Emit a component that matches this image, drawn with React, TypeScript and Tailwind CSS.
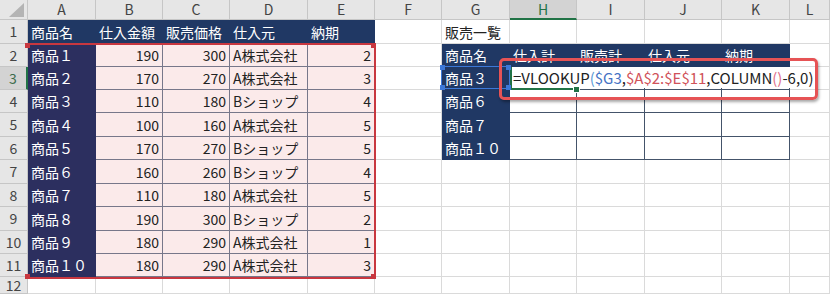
import React from "react";

const cols = ["A", "B", "C", "D", "E", "F", "G", "H", "I", "J", "K", "L"];

const rows: (string | number)[][] = [
  ["商品名", "仕入金額", "販売価格", "仕入元", "納期"],
  ["商品１", 190, 300, "A株式会社", 2],
  ["商品２", 170, 270, "A株式会社", 3],
  ["商品３", 110, 180, "Bショップ", 4],
  ["商品４", 100, 160, "A株式会社", 5],
  ["商品５", 170, 270, "Bショップ", 5],
  ["商品６", 160, 260, "Bショップ", 4],
  ["商品７", 110, 180, "A株式会社", 5],
  ["商品８", 190, 300, "Bショップ", 2],
  ["商品９", 180, 290, "A株式会社", 1],
  ["商品１０", 180, 290, "A株式会社", 3],
];

const summary: Record<number, string[]> = {
  2: ["商品名", "仕入計", "販売計", "仕入元", "納期"],
  3: ["商品３"],
  4: ["商品６"],
  5: ["商品７"],
  6: ["商品１０"],
};

const NAVY = "bg-[#203864] text-white border-r border-b border-[#203864]";
const NAVY_A = "bg-[#2c2f5f] text-white border-r border-b border-[#2c2f5f]";
const PINK = "bg-[#fbeaea] text-[#222] border-r border-b border-[#77778a]";
const PLAIN = "bg-white text-[#222] border-r border-b border-[#dadada]";
const BOXED = "bg-white text-[#222] border-r border-b border-[#44546a]";

// four small square grips laid out on the corners of a range-finder box
function Grips({ color }: { color: string }) {
  return (
    <div className="absolute -inset-[2px] flex flex-col justify-between pointer-events-none">
      <div className="flex justify-between">
        <span className={`w-[5px] h-[5px] ${color}`} />
        <span className={`w-[5px] h-[5px] ${color}`} />
      </div>
      <div className="flex justify-between">
        <span className={`w-[5px] h-[5px] ${color}`} />
        <span className={`w-[5px] h-[5px] ${color}`} />
      </div>
    </div>
  );
}

function Formula() {
  return (
    <span className="relative z-10 flex items-center self-stretch min-w-[302px] bg-white pl-[1px] text-[15px] text-[#222]">
      =VLOOKUP<span className="text-[#5b9bd5]">(</span>
      <span className="text-[#4472c4]">$G3</span>,
      <span className="text-[#d0525a]">$A$2:$E$11</span>,COLUMN
      <span className="text-[#e0708a]">()</span>-6,0)
    </span>
  );
}

function cellFor(r: number, c: number): { text: React.ReactNode; cls: string; right?: boolean } {
  if (r <= 11 && c <= 5) {
    const v = rows[r - 1][c - 1];
    if (r === 1) return { text: v, cls: NAVY };
    if (c === 1) return { text: v, cls: NAVY_A };
    return { text: v, cls: PINK, right: typeof v === "number" };
  }
  if (r === 1 && c === 7) return { text: "販売一覧", cls: PLAIN };
  if (r === 3 && c === 8)
    return {
      text: (
        <>
          <Formula />
          <span className="absolute -right-[3px] -bottom-[4px] z-10 w-[5px] h-[5px] bg-[#217346] ring-1 ring-white" />
        </>
      ),
      cls: "bg-white border-r border-[#44546a] border-l-2 border-l-[#217346] border-b-2 border-b-[#217346] !pl-0 overflow-visible",
    };
  if (r >= 2 && r <= 6 && c >= 7 && c <= 11) {
    const v = summary[r][c - 7] ?? null;
    if (r === 2 || c === 7) return { text: v, cls: NAVY };
    return { text: null, cls: BOXED };
  }
  return { text: null, cls: PLAIN };
}

export default function App() {
  const sheetRows = Array.from({ length: 12 }, (_, i) => i + 1);

  return (
    <div
      className="relative w-[830px] h-[294px] overflow-hidden bg-white"
      style={{ fontFamily: '"Noto Sans CJK JP", "Noto Sans", sans-serif' }}
    >
      <div className="grid grid-cols-[28px_68px_67px_67px_78px_67px_67px_68px_67px_68px_77px_68px_40px] grid-rows-[20px_24px_23px_23px_23px_24px_23px_24px_23px_24px_23px_23px_17px]">
        <div className="bg-[#e6e6e6] border-r border-b border-[#c6c6c6]">
          <svg width="28" height="20">
            <polygon points="9,17 24,17 24,3" fill="#b4b4b4" />
          </svg>
        </div>
        {cols.map((col) => (
          <div
            key={col}
            className={
              col === "H"
                ? "flex items-center justify-center bg-[#d3d3d3] text-[#217346] text-[14px] border-r border-[#c6c6c6] border-b-2 border-b-[#217346]"
                : "flex items-center justify-center bg-[#e6e6e6] text-[#444] text-[14px] border-r border-b border-[#c6c6c6]"
            }
          >
            {col}
          </div>
        ))}
        {sheetRows.map((r) => (
          <React.Fragment key={r}>
            <div
              className={
                r === 3
                  ? "flex items-center justify-center bg-[#d3d3d3] text-[#3b6b4c] text-[14px] border-b border-[#c6c6c6] border-r-2 border-r-[#217346]"
                  : "flex items-center justify-center bg-[#e6e6e6] text-[#444] text-[14px] border-r border-b border-[#c6c6c6]"
              }
            >
              {r}
            </div>
            {cols.map((col, ci) => {
              const cell = cellFor(r, ci + 1);
              const isA2 = r === 2 && ci === 0;
              const isG3 = r === 3 && ci === 6;
              return (
                <div
                  key={col}
                  className={`relative flex items-center whitespace-nowrap text-[14px] leading-none ${cell.cls} ${
                    cell.right ? "justify-end pr-[3px]" : "pl-[3px]"
                  } ${isG3 ? "z-20" : ""} ${isA2 ? "z-10" : ""}`}
                >
                  {cell.text}
                  {isA2 && (
                    // range finder for $A$2:$E$11
                    <div className="absolute -left-[1px] -top-[1px] w-[349px] h-[236px] border-2 border-l-0 border-[#c8373f] pointer-events-none">
                      <Grips color="bg-[#c8373f]" />
                    </div>
                  )}
                  {isG3 && (
                    // range finder for $G3
                    <div className="absolute -left-[1px] -top-[1px] -right-[1px] bottom-0 border border-[#3c78d8] pointer-events-none">
                      <Grips color="bg-[#3c78d8]" />
                    </div>
                  )}
                </div>
              );
            })}
          </React.Fragment>
        ))}
      </div>

      {/* red callout drawn over the edited cell */}
      <div className="absolute left-[499px] top-[58px] w-[319px] h-[42px] rounded-[5px] border-[3px] border-[#e65355] shadow-[1px_2px_3px_rgba(0,0,0,0.35)] z-30" />
    </div>
  );
}
